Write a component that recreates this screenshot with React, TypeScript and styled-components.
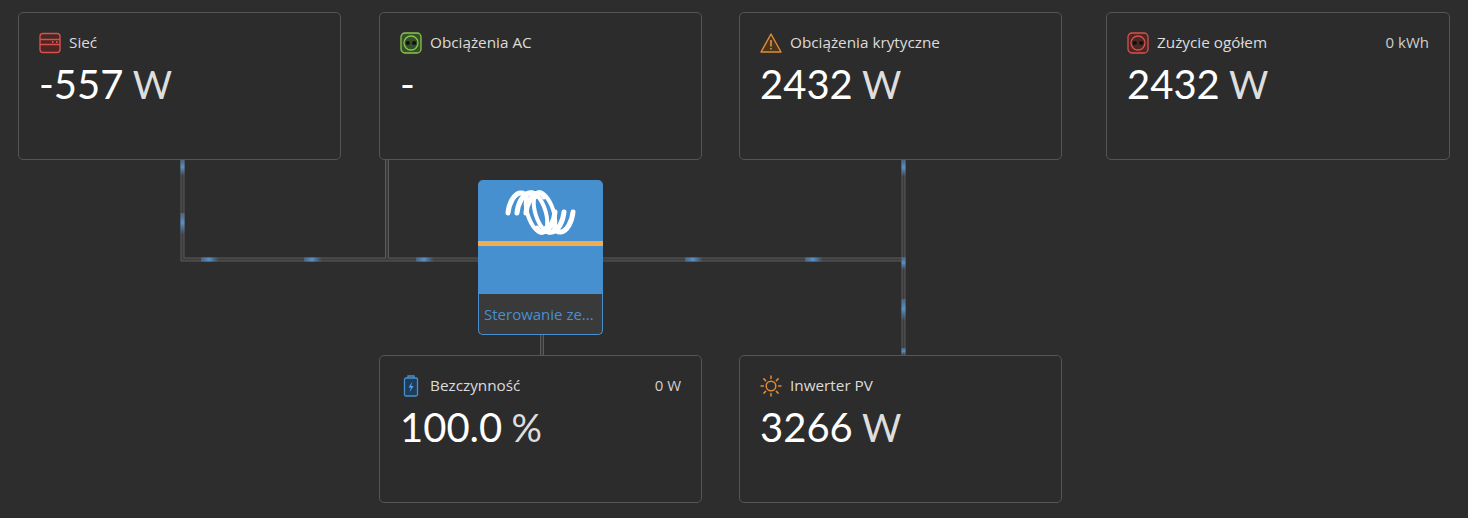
import React from "react";
import styled, { createGlobalStyle } from "styled-components";

const GlobalStyle = createGlobalStyle`
  html, body {
    margin: 0;
    padding: 0;
    background: #2d2d2d;
  }
  body {
    font-family: "Open Sans", "Lato", sans-serif;
  }
`;

const GridIcon = () => (
  <svg width="22" height="22" viewBox="0 0 22 22" fill="none" stroke="#d8504a" strokeWidth="1.4">
    <rect x="1" y="1.5" width="20" height="19" rx="3" fill="#4a2624" />
    <path d="M1 7.5h20M1 12.5h20" />
    <path d="M13 10h1.5M17 10h1.5" strokeWidth="2" />
  </svg>
);

const SocketIcon = ({ color, fill }: { color: string; fill: string }) => (
  <svg width="22" height="22" viewBox="0 0 22 22" fill="none" stroke={color} strokeWidth="1.3">
    <rect x="1" y="1" width="20" height="20" rx="4" fill={fill} />
    <circle cx="11" cy="11" r="7" />
    <circle cx="7.8" cy="11" r="2.1" fill="#111" stroke="none" />
    <circle cx="14.2" cy="11" r="2.1" fill="#111" stroke="none" />
  </svg>
);

const WarningIcon = () => (
  <svg width="22" height="22" viewBox="0 0 22 22" fill="none" stroke="#dc8f3c" strokeWidth="1.4">
    <path d="M11 2 L21 20 H1 Z" strokeLinejoin="round" fill="#4d3419" />
    <path d="M11 8v6.5M11 16v1.6" stroke="#e8a45c" />
  </svg>
);

const BatteryIcon = () => (
  <svg width="22" height="22" viewBox="0 0 22 22" fill="none" stroke="#4790d0" strokeWidth="1.3">
    <rect x="4.5" y="3" width="13" height="18" rx="1.5" fill="#1d3d5c" />
    <path d="M8 3V1h6v2" />
    <path d="M12.5 6.5 L8.5 12.5 H11 L9.5 17.5 L13.5 11 H11 Z" fill="#5aa3e0" stroke="none" />
  </svg>
);

const SunIcon = () => (
  <svg width="22" height="22" viewBox="0 0 22 22" fill="none" stroke="#e08a34" strokeWidth="1.5">
    <circle cx="11" cy="11" r="4.8" />
    <path d="M11 1v2.4M11 18.6V21M1 11h2.4M18.6 11H21M3.9 3.9l1.7 1.7M16.4 16.4l1.7 1.7M3.9 18.1l1.7-1.7M16.4 5.6l1.7-1.7" strokeLinecap="round" />
  </svg>
);

const coilArcs = [0, 9, 18].map((x) => `M${x + 3} 24 C${x + 4} 14 ${x + 9} 5 ${x + 15} 4 C${x + 18} 3.5 ${x + 20} 5 ${x + 21} 8`);

const CoilLogo = () => (
  <svg width="72" height="47" viewBox="0 0 72 47" fill="none" stroke="#fff" strokeWidth="5" strokeLinecap="round">
    {coilArcs.map((d) => <path key={d} d={d} />)}
    <g transform="rotate(180 35.5 23.5)">
      {coilArcs.map((d) => <path key={d} d={d} />)}
    </g>
    <ellipse cx="31.5" cy="23.5" rx="9" ry="21" transform="rotate(-18 31.5 23.5)" strokeWidth="4" />
    <ellipse cx="39.5" cy="23.5" rx="9" ry="21" transform="rotate(-18 39.5 23.5)" strokeWidth="4" />
  </svg>
);

// wire runs, page coordinates
const wires = [
  "M182.5 160V259.5H478",
  "M387 160V259.5",
  "M603 259.5H903.5",
  "M903.5 160V355",
  "M542 335V355",
];

const pulses = [
  { x: 182.5, y: 160, len: 16, vertical: true },
  { x: 182.5, y: 213, len: 22, vertical: true },
  { x: 201, y: 259.5, len: 18, vertical: false },
  { x: 304, y: 259.5, len: 18, vertical: false },
  { x: 416, y: 259.5, len: 18, vertical: false },
  { x: 685, y: 259.5, len: 18, vertical: false },
  { x: 805, y: 259.5, len: 18, vertical: false },
  { x: 903.5, y: 160, len: 17, vertical: true },
  { x: 903.5, y: 257, len: 13, vertical: true },
  { x: 903.5, y: 299, len: 22, vertical: true },
  { x: 903.5, y: 348, len: 7, vertical: true },
];

const WireLayer = () => (
  <WireSvg width="1468" height="518" fill="none">
    <defs>
      <linearGradient id="pulseV" x1="0" y1="0" x2="0" y2="1">
        <stop offset="0" stopColor="#4f86bd" stopOpacity="0.5" />
        <stop offset="0.45" stopColor="#5a90c6" />
        <stop offset="1" stopColor="#4f86bd" stopOpacity="0" />
      </linearGradient>
      <linearGradient id="pulseH" x1="0" y1="0" x2="1" y2="0">
        <stop offset="0" stopColor="#4f86bd" stopOpacity="0.5" />
        <stop offset="0.45" stopColor="#5a90c6" />
        <stop offset="1" stopColor="#4f86bd" stopOpacity="0" />
      </linearGradient>
    </defs>
    {wires.map((d) => <path key={d} d={d} stroke="#5a5a5a" strokeWidth="4" />)}
    {wires.map((d) => <path key={d} d={d} stroke="#3b3b3b" strokeWidth="2" />)}
    {pulses.map((p) =>
      p.vertical ? (
        <rect key={`${p.x}-${p.y}`} x={p.x - 2} y={p.y} width="4" height={p.len} fill="url(#pulseV)" />
      ) : (
        <rect key={`${p.x}-${p.y}`} x={p.x} y={p.y - 2} width={p.len} height="4" fill="url(#pulseH)" />
      )
    )}
  </WireSvg>
);

type CardProps = {
  col: number;
  row: number;
  icon: React.ReactNode;
  title: string;
  side?: string;
  value: string;
  unit?: string;
};

const Card = ({ col, row, icon, title, side, value, unit }: CardProps) => (
  <Panel $col={col} $row={row}>
    <Header>
      <IconSlot>{icon}</IconSlot>
      <Title>{title}</Title>
      {side && <Side>{side}</Side>}
    </Header>
    <Value>
      {value} {unit && <Unit>{unit}</Unit>}
    </Value>
  </Panel>
);

function App() {
  return (
    <>
      <GlobalStyle />
      <Page>
        <WireLayer />
        <Card col={1} row={1} icon={<GridIcon />} title="Sieć" value="-557" unit="W" />
        <Card col={3} row={1} icon={<SocketIcon color="#8bc34a" fill="#33502a" />} title="Obciążenia AC" value="-" />
        <Card col={5} row={1} icon={<WarningIcon />} title="Obciążenia krytyczne" value="2432" unit="W" />
        <Card col={7} row={1} icon={<SocketIcon color="#d8504a" fill="#4a2624" />} title="Zużycie ogółem" side="0 kWh" value="2432" unit="W" />
        <Inverter>
          <LogoArea>
            <CoilLogo />
          </LogoArea>
          <InverterBody />
          <InverterFooter>Sterowanie ze...</InverterFooter>
        </Inverter>
        <Card col={3} row={3} icon={<BatteryIcon />} title="Bezczynność" side="0 W" value="100.0" unit="%" />
        <Card col={5} row={3} icon={<SunIcon />} title="Inwerter PV" value="3266" unit="W" />
      </Page>
    </>
  );
}
export default App;

const Page = styled.div`
  position: relative;
  box-sizing: border-box;
  width: 1468px;
  height: 518px;
  padding: 12px 18px 15px;
  display: grid;
  grid-template-columns: 323px 38px 323px 37px 323px 44px 344px;
  grid-template-rows: 148px 195px 148px;
  background: #2d2d2d;
  overflow: hidden;
`;

const WireSvg = styled.svg`
  position: absolute;
  left: 0;
  top: 0;
`;

const Panel = styled.section<{ $col: number; $row: number }>`
  position: relative;
  grid-column: ${(p) => p.$col};
  grid-row: ${(p) => p.$row};
  box-sizing: border-box;
  padding: 19px 20px;
  background: #2c2c2c;
  border: 1px solid #555;
  border-radius: 5px;
`;

const Header = styled.div`
  display: flex;
  align-items: center;
  height: 22px;
`;

const IconSlot = styled.span`
  display: flex;
  width: 22px;
  height: 22px;
  margin-right: 8px;
`;

const Title = styled.span`
  font-size: 15.3px;
  line-height: 20px;
  margin-top: -2px;
  color: #dcdcdc;
`;

const Side = styled.span`
  margin-left: auto;
  margin-top: -2px;
  font-size: 15px;
  line-height: 20px;
  color: #cfcfcf;
`;

const Value = styled.div`
  margin-top: 6px;
  font-family: "Lato", sans-serif;
  font-size: 40px;
  line-height: 48px;
  word-spacing: -1px;
  color: #fff;
`;

const Unit = styled.span`
  font-size: 38px;
  color: #dedede;
`;

const Inverter = styled.div`
  position: relative;
  grid-column: 3;
  grid-row: 2;
  justify-self: center;
  align-self: center;
  box-sizing: border-box;
  width: 125px;
  height: 155px;
  display: flex;
  flex-direction: column;
  background: #4790d0;
  border-radius: 5px;
  overflow: hidden;
`;

const LogoArea = styled.div`
  height: 66px;
  flex: none;
  display: flex;
  justify-content: center;
  align-items: flex-end;
  padding-bottom: 5px;
  box-sizing: border-box;
  border-bottom: 5px solid #f0ac4f;
`;

const InverterBody = styled.div`
  flex: 1;
`;

const InverterFooter = styled.div`
  box-sizing: border-box;
  height: 41px;
  padding: 0 5px;
  display: flex;
  align-items: center;
  background: #3a3a3a;
  border: 1px solid #4790d0;
  border-top: none;
  border-radius: 0 0 5px 5px;
  color: #4790d0;
  font-size: 15px;
  white-space: nowrap;
`;
